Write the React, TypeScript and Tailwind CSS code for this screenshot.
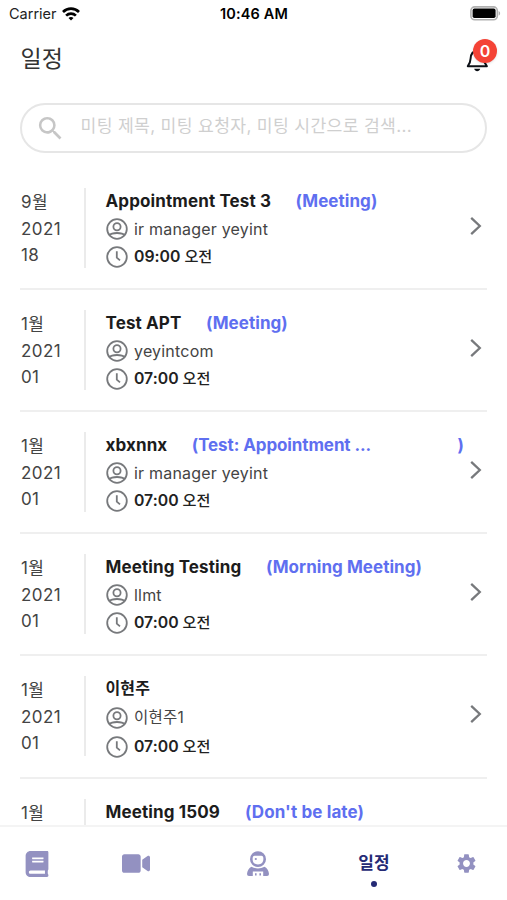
import React from "react";
import { FaBook, FaVideo } from "react-icons/fa";
import { MdSearch, MdSettings } from "react-icons/md";

interface Appointment {
  id: string;
  month: string;
  year: string;
  day: string;
  title: string;
  type?: string;
  truncated?: boolean;
  person: string;
  time: string;
}

const APPOINTMENTS: Appointment[] = [
  { id: "a1", month: "9월", year: "2021", day: "18", title: "Appointment Test 3", type: "Meeting", person: "ir manager yeyint", time: "09:00 오전" },
  { id: "a2", month: "1월", year: "2021", day: "01", title: "Test APT", type: "Meeting", person: "yeyintcom", time: "07:00 오전" },
  { id: "a3", month: "1월", year: "2021", day: "01", title: "xbxnnx", type: "Test: Appointment ...", truncated: true, person: "ir manager yeyint", time: "07:00 오전" },
  { id: "a4", month: "1월", year: "2021", day: "01", title: "Meeting Testing", type: "Morning Meeting", person: "llmt", time: "07:00 오전" },
  { id: "a5", month: "1월", year: "2021", day: "01", title: "이현주", person: "이현주1", time: "07:00 오전" },
];

// Partly scrolled under the tab bar, only its first line shows
const NEXT_APPOINTMENT = { month: "1월", title: "Meeting 1509", type: "Don't be late" };

function WifiIcon() {
  return (
    <svg viewBox="0 0 18 14" className="w-[18px] h-[14px]" fill="none" stroke="#000" strokeWidth="2.7">
      <path d="M1 5 C5.5 .6 12.5 .6 17 5" />
      <path d="M4.1 8.6 C6.9 5.9 11.1 5.9 13.9 8.6" />
      <path d="M6.5 11 C8 9.6 10 9.6 11.5 11 L9 13.5 Z" fill="#000" stroke="none" />
    </svg>
  );
}

function BatteryIcon() {
  return (
    <svg viewBox="0 0 31 15" className="w-[31px] h-[15px]">
      <rect x=".9" y=".9" width="26.4" height="12.8" rx="3.8" fill="#fff" stroke="#b0b0b0" strokeWidth="1.6" />
      <rect x="2.6" y="2.6" width="23" height="9.4" rx="1.8" fill="#000" />
      <path d="M28.6 5 C30.6 5.8 30.6 8.8 28.6 9.6 Z" fill="#b0b0b0" />
    </svg>
  );
}

function BellIcon() {
  return (
    <svg viewBox="0 0 22 24" className="w-[22px] h-[24px]" fill="none" stroke="#0c1016" strokeWidth="2" strokeLinejoin="round">
      <path d="M1.8 18.2 C4 15.6 4.4 14.4 4.6 10.5 C4.9 5.5 7 3 11.2 3 C15.4 3 17.4 5.5 17.8 10.5 C18 14.4 18.6 15.6 20.8 18.2 Z" />
      <path d="M8.2 20.8 H14.2 C13.6 24 8.8 24 8.2 20.8 Z" fill="#0c1016" stroke="none" />
    </svg>
  );
}

function PersonIcon() {
  return (
    <svg viewBox="0 0 22 22" className="w-[22px] h-[22px] shrink-0" fill="none" stroke="#77797c" strokeWidth="1.8">
      <circle cx="11" cy="11" r="9.8" />
      <circle cx="11" cy="8.7" r="3.6" />
      <path d="M3.4 17.2 C5 15.2 7 15 11 15 C15 15 17 15.2 18.6 17.2" />
    </svg>
  );
}

function ClockIcon() {
  return (
    <svg viewBox="0 0 22 22" className="w-[22px] h-[22px] shrink-0" fill="none" stroke="#77797c" strokeWidth="1.8">
      <circle cx="11" cy="11" r="9.8" />
      <path d="M10.8 5.2 V11.6 L14 14.4" />
    </svg>
  );
}

function ChevronIcon() {
  return (
    <svg viewBox="0 0 12 20" className="w-3 h-5 shrink-0 mt-[28px] mr-[5px]" fill="none" stroke="#77797c" strokeWidth="2.3">
      <path d="M1.2 1.8 L9.8 10 L1.2 18.2" />
    </svg>
  );
}

function AgentIcon() {
  return (
    <svg viewBox="0 0 24 26" className="w-6 h-[26px]" fill="#9391c1">
      <path fillRule="evenodd" d="M12 .3 A8 7.9 0 1 1 12 16.1 A8 7.9 0 0 1 12 .3 Z M8.6 4.8 Q6.6 4.8 6.6 8 Q6.6 13.4 12 13.4 Q17.4 13.4 17.4 8 Q17.4 4.8 15.4 4.8 Z" />
      <circle cx="9.8" cy="8" r="1.1" />
      <path fillRule="evenodd" d="M5.4 15.8 Q12 19 18.6 15.8 Q22.6 18 23 23 Q23 25 21 25 H3 Q1 25 1 23 Q1.4 18 5.4 15.8 Z M6.8 20.6 V25 H17.2 V20.6 Z" />
      <path d="M9 22.2 H10.6 V24.4 H9 Z M13.4 22.2 H15 V24.4 H13.4 Z" />
    </svg>
  );
}

function AppointmentRow({ item }: { item: Appointment }) {
  return (
    <li className="h-[122px] last:h-[123px] shrink-0 border-b-2 border-[#efefef] flex pt-[20px] group">
      <div className="w-[66px] h-[80px] border-r-2 border-[#ebebeb] pl-px text-[17px] text-[#444] tracking-[0.4px]">
        <p className="h-[27px] leading-[28px]">{item.month}</p>
        <p className="h-[27px] leading-[28px]">{item.year}</p>
        <p className="h-[26px] leading-[26px]">{item.day}</p>
      </div>
      <div className="flex-1 min-w-0 pl-[19.5px]">
        <div className="flex h-[26px] leading-[27px] text-[17px] font-bold whitespace-nowrap tracking-[0.12px] group-last:text-base group-last:leading-[24px] group-last:h-[27px]">
          <h2 className="text-[#1c1c1c]">{item.title}</h2>
          {item.type && (
            <span className={`ml-[24.5px] text-[#5f6ff0] ${item.truncated ? "tracking-[-0.1px]" : "tracking-[0.05px]"}`}>
              ({item.type}
              {!item.truncated && ")"}
            </span>
          )}
          {item.truncated && <span className="ml-auto mr-[6px] text-[#5f6ff0]">)</span>}
        </div>
        <div className="flex items-center h-[29px] gap-[6.5px] text-base text-[#444] tracking-[0.2px] group-last:text-[15.5px]">
          <PersonIcon />
          <span>{item.person}</span>
        </div>
        <div className="flex items-center h-[28px] gap-[6.5px] text-[15.8px] font-semibold text-[#222] group-last:h-[29px]">
          <ClockIcon />
          <span>
            {item.time.split(" ")[0]} <span className="text-[15.2px] font-medium">{item.time.split(" ")[1]}</span>
          </span>
        </div>
      </div>
      <ChevronIcon />
    </li>
  );
}

export default function App() {
  return (
    <div className="w-full h-[900px] bg-white flex flex-col overflow-hidden font-['Inter','Noto_Sans_CJK_KR',sans-serif]">
      {/* Status bar */}
      <div className="h-[27px] shrink-0 grid grid-cols-3 items-center pl-[9px] pr-[6px] text-[14.5px] text-[#222]">
        <div className="flex items-center gap-[5px]">
          <span>Carrier</span>
          <WifiIcon />
        </div>
        <span className="text-center font-semibold text-black tracking-[0.15px] -ml-[2px]">10:46 AM</span>
        <div className="flex justify-end">
          <BatteryIcon />
        </div>
      </div>

      {/* Header */}
      <header className="h-[76px] shrink-0 flex justify-between pl-[20.5px] pr-[10px] pt-[12px]">
        <h1 className="text-[23px] leading-[41px] text-[#333]">일정</h1>
        <div className="relative w-[31px] h-[35px] pt-[9px]">
          <BellIcon />
          <span className="absolute right-0 top-0 w-6 h-6 rounded-full bg-[#f44336] shadow text-white text-base leading-6 font-semibold text-center">0</span>
        </div>
      </header>

      {/* Search */}
      <div className="h-[50px] shrink-0 mx-5 border-2 border-[#e6e6e6] rounded-full flex items-center pl-[13px]">
        <MdSearch className="w-[31px] h-[31px] text-[#c6c6c6]" />
        <input
          placeholder="미팅 제목, 미팅 요청자, 미팅 시간으로 검색..."
          className="flex-1 ml-[14.5px] pb-[4px] outline-none text-[17.2px] tracking-[0.32px] placeholder:text-[#cfcfcf]"
        />
      </div>

      {/* Appointment list */}
      <div className="flex-1 min-h-0 overflow-hidden pt-[15px] px-5 flex flex-col">
        <ul className="flex flex-col">
          {APPOINTMENTS.map(item => (
            <AppointmentRow key={item.id} item={item} />
          ))}
        </ul>
        <div className="shrink-0 h-[46px] flex pt-[20px]">
          <p className="w-[66px] border-r-2 border-[#ebebeb] pl-px text-[17px] leading-[28px] text-[#444] tracking-[0.4px]">{NEXT_APPOINTMENT.month}</p>
          <div className="pl-[19.5px] flex gap-[25px] leading-[27px] text-[17px] font-bold tracking-[0.12px]">
            <h2 className="text-[#1c1c1c]">{NEXT_APPOINTMENT.title}</h2>
            <span className="text-[#5f6ff0]">({NEXT_APPOINTMENT.type})</span>
          </div>
        </div>
      </div>

      {/* Tab bar */}
      <nav className="h-[75px] shrink-0 border-t-2 border-[#f4f4f4] flex items-start pl-[25px] pt-[24px] text-[#9391c1]">
        <FaBook className="w-[24px] h-[26px]" />
        <FaVideo className="w-[28px] h-[25px] ml-[73px]" />
        <div className="ml-[96px]">
          <AgentIcon />
        </div>
        <div className="flex flex-col items-center w-[32px] ml-[88px] text-[#252a75]">
          <span className="text-[17px] leading-6 font-bold whitespace-nowrap">일정</span>
          <span className="w-[6px] h-[6px] mt-[6px] rounded-full bg-[#252a75]" />
        </div>
        <MdSettings className="w-[23px] h-[23px] ml-[65px] mt-px" />
      </nav>
    </div>
  );
}
